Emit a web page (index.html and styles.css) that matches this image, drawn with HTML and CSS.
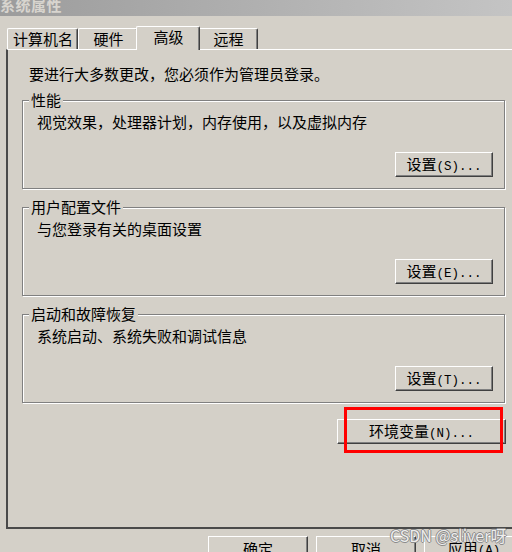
FILE: index.html
```html
<!DOCTYPE html>
<html lang="zh-CN">
<head>
<meta charset="utf-8">
<title>系统属性</title>
<link rel="stylesheet" href="styles.css">
</head>
<body>
<div class="window">
  <div class="titlebar"><span class="title">系统属性</span></div>
  <div class="tabs">
    <div class="tab tab-first">计算机名</div>
    <div class="tab">硬件</div>
    <div class="tab tab-active">高级</div>
    <div class="tab">远程</div>
  </div>
  <div class="panel">
    <p class="intro">要进行大多数更改，您必须作为管理员登录。</p>
    <fieldset class="group">
      <legend>性能</legend>
      <p class="desc">视觉效果，处理器计划，内存使用，以及虚拟内存</p>
      <div class="actions"><button class="btn btn-set">设置<span class="mono">(S)...</span></button></div>
    </fieldset>
    <fieldset class="group">
      <legend>用户配置文件</legend>
      <p class="desc">与您登录有关的桌面设置</p>
      <div class="actions"><button class="btn btn-set">设置<span class="mono">(E)...</span></button></div>
    </fieldset>
    <fieldset class="group">
      <legend>启动和故障恢复</legend>
      <p class="desc">系统启动、系统失败和调试信息</p>
      <div class="actions"><button class="btn btn-set">设置<span class="mono">(T)...</span></button></div>
    </fieldset>
    <div class="env-row">
      <div class="env-wrap">
        <button class="btn btn-env">环境变量<span class="mono">(N)...</span></button>
        <div class="highlight"></div>
      </div>
    </div>
  </div>
  <div class="dialog-buttons">
    <button class="btn btn-dialog">确定</button>
    <button class="btn btn-dialog">取消</button>
    <button class="btn btn-dialog">应用<span class="mono">(A)</span></button>
  </div>
  <div class="watermark">CSDN @sliver呀</div>
</div>
</body>
</html>
```

FILE: styles.css
```css
html, body {
  margin: 0;
  padding: 0;
  background: #d4d0c8;
  overflow: hidden;
}

body {
  width: 512px;
  height: 552px;
  font-family: "Noto Sans CJK SC", "Noto Sans", sans-serif;
  font-size: 15px;
  color: #000;
}

.window {
  position: relative;
  width: 512px;
  height: 552px;
  overflow: hidden;
}

.titlebar {
  height: 16px;
  background: linear-gradient(to right, #9c9c9c, #c4c4c4);
  overflow: hidden;
}

.title {
  display: block;
  margin-top: -4px;
  font-weight: bold;
  font-size: 15px;
  line-height: 18px;
  color: #d8d5cf;
  letter-spacing: 0.5px;
}

.tabs {
  display: flex;
  align-items: flex-end;
  margin-top: 10px;
  padding-left: 7px;
  height: 23px;
}

.tab {
  box-sizing: border-box;
  height: 21px;
  min-width: 60px;
  padding: 0 4px 0 5px;
  line-height: 19px;
  text-align: center;
  border-top: 1px solid #fff;
  border-left: 1px solid #fff;
  border-right: 1px solid #404040;
  box-shadow: inset -1px 0 0 #808080;
  border-radius: 2px 2px 0 0;
  white-space: nowrap;
}

.tab-first {
  min-width: 71px;
}

.tab-active {
  position: relative;
  z-index: 1;
  height: 24px;
  min-width: 64px;
  margin: 0 -2px -1px -2px;
  line-height: 20px;
  background: #d4d0c8;
  padding: 0 6px 0 7px;
}

.panel {
  box-sizing: border-box;
  width: 530px;
  height: 480px;
  margin-left: 6px;
  border-top: 1px solid #fff;
  border-left: 2px solid #4a4a4a;
  border-bottom: 2px solid #4a4a4a;
  padding-top: 15px;
}

.intro {
  margin: 0 0 0 21px;
  line-height: 18px;
}

.group {
  box-sizing: border-box;
  width: 483px;
  margin: 8px 0 0 14px;
  padding: 0;
  border: 1px solid #808080;
  box-shadow: inset 1px 1px 0 #fff, 1px 1px 0 #fff;
  min-width: 0;
}

.group + .group {
  margin-top: 9px;
}

.group legend {
  margin-left: 6px;
  padding: 0 2px;
  line-height: 18px;
  background: #d4d0c8;
}

.desc {
  margin: 4px 0 0 14px;
  line-height: 18px;
}

.actions {
  display: flex;
  justify-content: flex-end;
  padding: 21px 11px 11px 0;
}

.btn {
  box-sizing: border-box;
  height: 25px;
  margin: 0;
  padding: 0;
  font-family: "Noto Sans CJK SC", "Noto Sans", sans-serif;
  font-size: 15px;
  line-height: 21px;
  color: #000;
  background: #d4d0c8;
  border: 1px solid;
  border-color: #fff #404040 #404040 #fff;
  box-shadow: inset -1px -1px 0 #808080;
  white-space: nowrap;
}

.mono {
  font-family: "Liberation Mono", monospace;
  font-size: 12.5px;
}

.btn-set {
  width: 98px;
}

.env-row {
  display: flex;
  justify-content: flex-end;
  width: 484px;
  margin: 16px 0 0 14px;
}

.env-wrap {
  position: relative;
}

.btn-env {
  width: 169px;
}

.highlight {
  position: absolute;
  left: 7px;
  right: 3px;
  top: -12px;
  bottom: -9px;
  border: 3px solid #f00;
}

.dialog-buttons {
  display: flex;
  gap: 8px;
  margin-top: 7px;
  padding-left: 208px;
  width: 400px;
}

.btn-dialog {
  flex: none;
  width: 100px;
}

.watermark {
  position: absolute;
  left: 390px;
  top: 525px;
  font-family: "Noto Sans CJK SC", "Noto Sans", sans-serif;
  font-size: 16px;
  line-height: 20px;
  color: rgba(255, 255, 255, 0.85);
  text-shadow: 1px 0 0 #8c8c8c, -1px 0 0 #8c8c8c, 0 1px 0 #8c8c8c, 0 -1px 0 #8c8c8c;
  white-space: nowrap;
}
```
